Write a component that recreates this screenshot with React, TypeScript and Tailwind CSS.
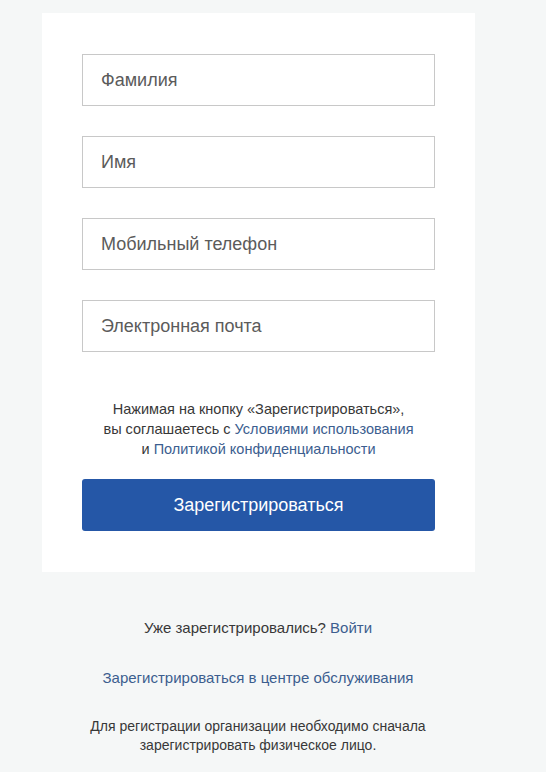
import { useState } from 'react'

const fields = ['Фамилия', 'Имя', 'Мобильный телефон', 'Электронная почта']

export default function App() {
  const [values, setValues] = useState<Record<string, string>>({})

  return (
    <div className="min-h-[772px] bg-[#f5f7f7] font-['Liberation_Sans',Arial,sans-serif] text-[#333]">
      <div className="pl-[42px] pt-[13px] w-[475px]">
        <div className="bg-white px-[40px] pt-[41px] pb-[41px]">
          <div className="flex flex-col gap-[30px]">
            {fields.map((f) => (
              <input
                key={f}
                placeholder={f}
                value={values[f] ?? ''}
                onChange={(e) => setValues({ ...values, [f]: e.target.value })}
                className="h-[52px] w-full border border-[#c8c8c8] px-[18px] text-[18px] text-[#333] placeholder:text-[#5b5b5b] outline-none"
              />
            ))}
          </div>

          <p className="mt-[47px] text-center text-[14.5px] leading-[20px] text-[#383838]">
            Нажимая на кнопку «Зарегистрироваться»,
            <br />
            вы соглашаетесь с <a href="#" className="text-[#3c5e8f]">Условиями использования</a>
            <br />
            и <a href="#" className="text-[#3c5e8f]">Политикой конфиденциальности</a>
          </p>

          <button className="mt-[20px] h-[52px] w-full rounded-[3px] bg-[#2557a7] text-[18px] text-white">
            Зарегистрироваться
          </button>
        </div>
      </div>

      <div className="w-[516px] flex flex-col items-center text-[15px] leading-[20px] text-[#383838]">
        <p className="mt-[46px]">
          Уже зарегистрировались? <a href="#" className="text-[#3c5e8f]">Войти</a>
        </p>
        <a href="#" className="mt-[30px] text-[#3c5e8f]">Зарегистрироваться в центре обслуживания</a>
        <p className="mt-[29px] text-center text-[14px] leading-[19px]">
          Для регистрации организации необходимо сначала
          <br />
          зарегистрировать физическое лицо.
        </p>
      </div>
    </div>
  )
}
